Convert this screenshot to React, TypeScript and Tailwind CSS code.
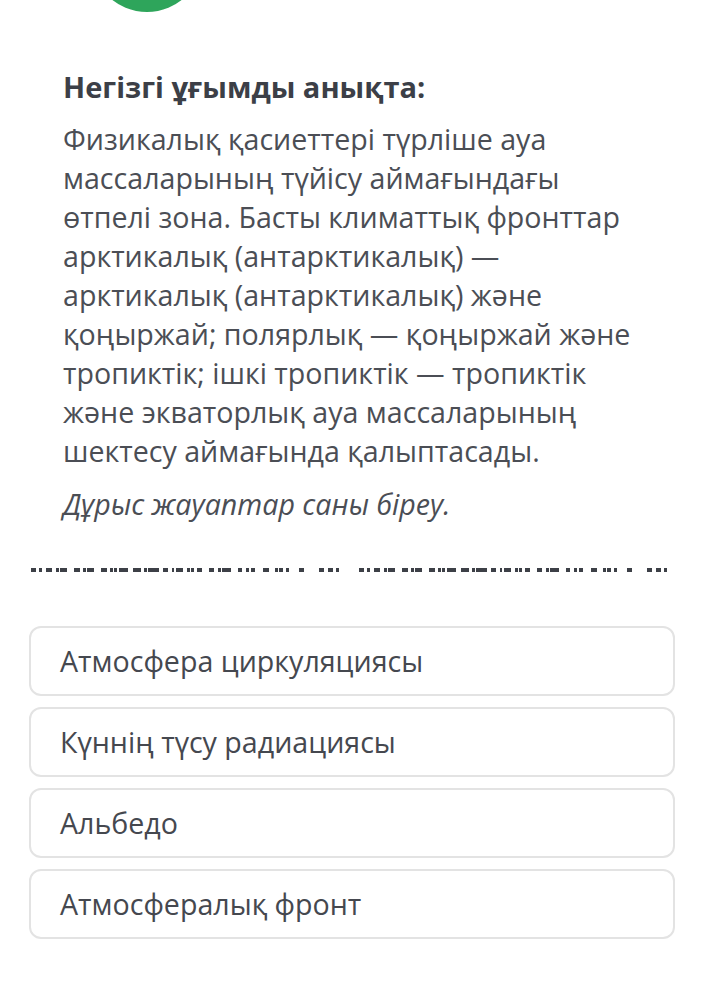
import React from 'react';

const dashes: [number, number][] = [
  [0, 5], [8, 3], [15, 6], [25, 3], [29, 7], [43, 6], [52, 3], [56, 7],
  [70, 6], [79, 3], [83, 3], [88, 9], [102, 8], [113, 3], [117, 11], [132, 5],
  [141, 2], [145, 7], [156, 3], [160, 3], [166, 5], [178, 5], [187, 3], [191, 9],
  [207, 4], [215, 3], [220, 4], [232, 6], [244, 3], [248, 4], [255, 3],
  [268, 5], [288, 5], [297, 5], [305, 3],
];

const answers = [
  'Атмосфера циркуляциясы',
  'Күннің түсу радиациясы',
  'Альбедо',
  'Атмосфералық фронт',
];

function DashedLine() {
  return (
    <svg width="648" height="6" viewBox="0 0 648 6" className="block">
      {[0, 328].map((off) =>
        dashes.map(([x, w], i) => (
          <rect key={off + '-' + i} x={off + x} y={1} width={w} height={4} fill="#3d4047" />
        ))
      )}
    </svg>
  );
}

export default function App() {
  return (
    <main className="relative w-[712px] h-[1004px] bg-white overflow-hidden" style={{ fontFamily: '"Open Sans", sans-serif' }}>
      <div className="absolute left-[91px] top-[-100px] w-[112px] h-[112px] rounded-full bg-[#2ea55b]" />
      <div className="pt-[66px] pl-[63px] pr-[60px]">
        <h1 className="text-[29px] font-bold text-[#3c3f47] leading-[42px]">Негізгі ұғымды анықта:</h1>
        <p className="mt-[11px] text-[28.6px] leading-[39px] text-[#4b4e55]">
          Физикалық қасиеттері түрліше ауа массаларының түйісу аймағындағы өтпелі зона. Басты климаттық фронттар арктикалық (антарктикалық) — арктикалық (антарктикалық) және қоңыржай; полярлық — қоңыржай және тропиктік; ішкі тропиктік — тропиктік және экваторлық ауа массаларының шектесу аймағында қалыптасады.
        </p>
        <p className="mt-[14px] text-[28.6px] leading-[39px] italic text-[#4b4e55]">Дұрыс жауаптар саны біреу.</p>
      </div>
      <div className="mt-[44px] pl-[31px]">
        <DashedLine />
      </div>
      <div className="mt-[53px] ml-[29px] mr-[37px] flex flex-col gap-[11px]">
        {answers.map((a) => (
          <div key={a} className="h-[70px] flex items-center px-[29px] rounded-[12px] border-2 border-[#e3e3e3] text-[28.6px] text-[#45484f]">
            {a}
          </div>
        ))}
      </div>
    </main>
  );
}
